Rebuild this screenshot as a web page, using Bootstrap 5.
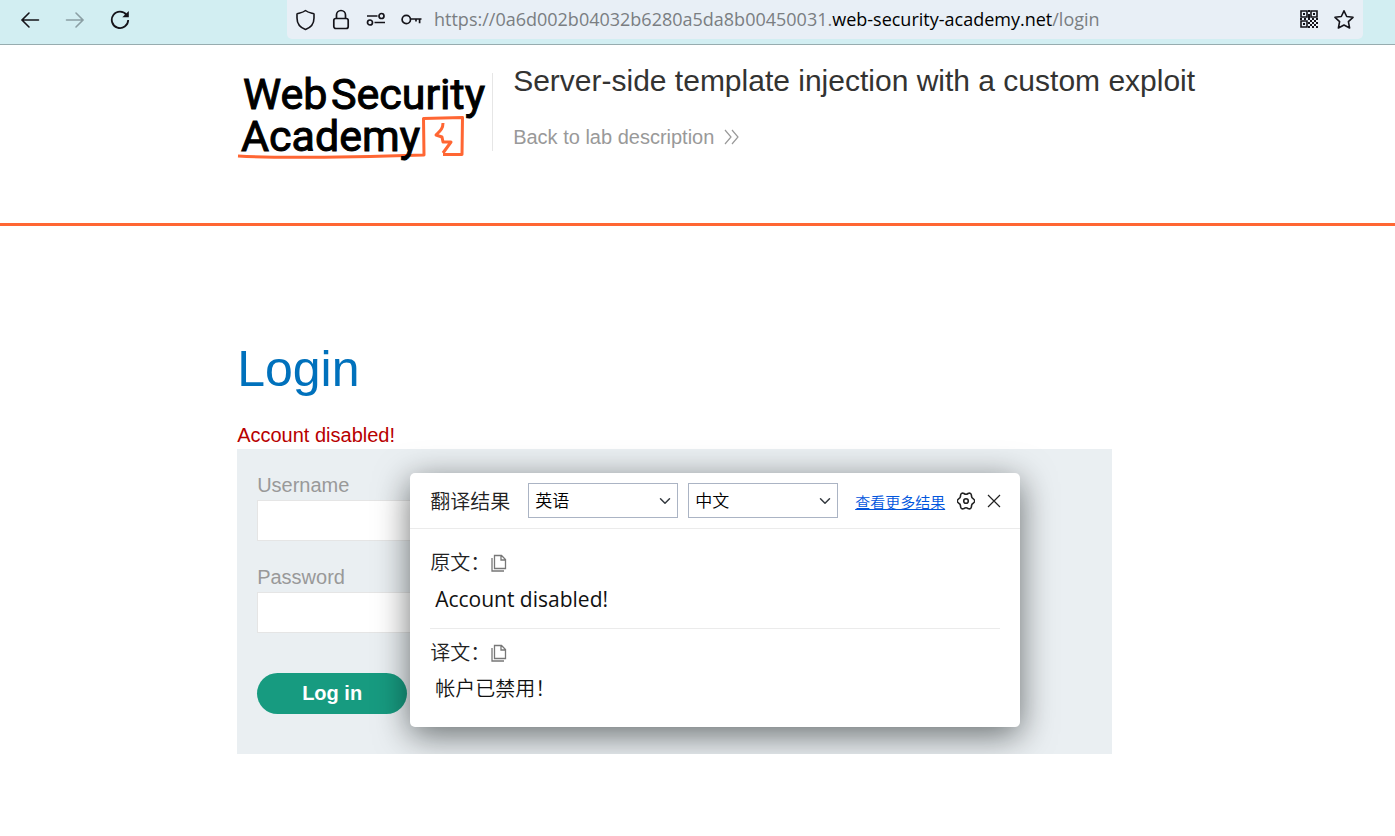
<!DOCTYPE html>
<html lang="en">
<head>
<meta charset="utf-8">
<meta name="viewport" content="width=device-width, initial-scale=1">
<title>Server-side template injection with a custom exploit</title>
<link href="https://cdn.jsdelivr.net/npm/bootstrap@5.3.0/dist/css/bootstrap.min.css" rel="stylesheet">
<style>
  body { font-family: "Liberation Sans", Arial, sans-serif; font-size: 20px; line-height: 24px; color: #333332; background: #fff; }
  svg { display: block; flex: none; fill: none; stroke: currentColor; }
  button.bare { border: 0; padding: 0; background: none; color: inherit; }
  button.forward { color: #8b9fa4; }
  .browser-bar { height: 45px; background: #d2eef2; border-bottom: 1px solid #97acaf; color: #15141a; padding: 0 32px 5px 20px; gap: 25px; }
  .address { height: 39px; margin-left: 132px; padding: 0 9px 0 8px; background: #e8eff6; border-radius: 0 0 5px 5px; gap: 15px; }
  .address-text { margin-left: -3px; padding-bottom: 2px; font-family: "Open Sans", sans-serif; font-size: 18px; color: #7a7e82; white-space: nowrap; }
  .address-text b { font-weight: 400; color: #000; }
  .indent { padding-left: 17%; }
  .lab-header { height: 181px; border-bottom: 3px solid #ff6633; padding-top: 19px; }
  .logo-box { width: 256px; height: 78px; margin-top: 9px; border-right: 1px solid #e6e6e6; }
  .logo-box svg { overflow: visible; }
  .logo-box text { font-family: "Roboto", sans-serif; font-size: 43px; font-weight: 400; fill: #000; stroke: #000; stroke-width: 1px; }
  .lab-title { font-size: 30px; line-height: 34px; margin: 0 0 27px; white-space: nowrap; }
  .lab-link { color: #999; text-decoration: none; }
  .login-heading { font-size: 50px; line-height: 58px; color: #0071bc; margin: 0 0 24px; }
  .login-area { padding-top: 114px; }
  .warning { color: #b80000; margin: 0; line-height: 27px; }
  .login-panel { max-width: 875px; height: 305px; background: #eaeff2; padding: 24px 20px 40px; }
  .login-panel label { display: block; color: #999; margin-bottom: 3px; }
  .login-panel .form-control { max-width: 500px; height: 41px; border: 1px solid #e5e5e5; border-radius: 0; margin-bottom: 24px; }
  .login-button { width: 150px; height: 41px; margin-top: 16px; padding: 0 0 2px; border: 0; border-radius: 21px; background: #179b80; color: #fff; font-size: 20px; font-weight: 700; }
  .login-button:hover { background: #128068; color: #fff; }
  .translation { position: absolute; left: 173px; top: 24px; width: 610px; height: 254px; background: #fff; border-radius: 5px; box-shadow: 0 8px 34px rgba(0, 8, 8, .56); font-family: "Open Sans", "Noto Sans CJK SC", sans-serif; font-weight: 400; color: #222; }
  .translation-head { height: 56px; padding: 0 0 0 20px; border-bottom: 1px solid #ebebeb; }
  .translation-head h2 { flex: none; font-size: 20px; line-height: 28px; font-weight: 350; margin: 2px 18px 0 0; }
  .translation-head .form-select { flex: none; width: 150px; height: 35px; margin-right: 10px; padding: 0 24px 0 6px; font-size: 17px; font-weight: 350; line-height: 28px; color: #000; border: 1px solid #abb4c4; border-radius: 0; background-position: right 5px center; background-size: 14px 12px; }
  .more-link { font-size: 15px; font-weight: 350; color: #0055dd; margin: 3px 12px 0 7px; }
  .passage { padding: 20px 0 14px; margin: 0 20px; }
  .passage + .passage { border-top: 1px solid #ebebeb; padding-top: 10px; }
  .passage h3 { font-size: 20px; line-height: 28px; font-weight: 350; margin: 0; }
  .passage h3 button { color: #777; }
  .passage p { font-size: 20px; line-height: 28px; font-weight: 400; margin: 8px 0 0 5px; color: #111; }
  .passage p:lang(en) { font-size: 21px; margin-bottom: 1px; }
  .passage p:lang(zh) { font-weight: 350; }
</style>
</head>
<body>
<nav class="browser-bar d-flex align-items-center" aria-label="Browser">
  <button class="bare" type="button" aria-label="Back"><svg width="20" height="20" stroke-width="1.6"><path d="M18.500 10H2M9 3L2 10l7 7" stroke-linecap="round"/></svg></button>
  <button class="bare forward" type="button" aria-label="Forward"><svg width="20" height="20" stroke-width="1.600"><path d="M1.500 10H18M11 3l7 7-7 7" stroke-linecap="round"/></svg></button>
  <button class="bare" type="button" aria-label="Reload"><svg width="20" height="20" stroke-width="1.800"><path d="M16.600 5A8.200 8.200 0 1 0 18.200 10"/><path d="M18.800 1v6.200h-6.500z" fill="currentColor" stroke="none"/></svg></button>
  <div class="address d-flex align-items-center flex-grow-1">
    <svg width="21" height="22" stroke-width="1.600"><path d="M10.500 1.500C13 3.500 16 4 19 5v4c0 5-3 9.500-8.500 11.500C5 18.500 2 14 2 9V5c3-1 6-1.500 8.500-3.500z" stroke-linejoin="round"/></svg>
    <svg width="20" height="22" stroke-width="1.700"><rect x="2.800" y="9.500" width="14.400" height="10" rx="2"/><path d="M5.500 9.500V6a4.500 4.500 0 0 1 9 0v3.500"/></svg>
    <svg width="20" height="20" stroke-width="1.700"><path d="M1 6h10.500M8.500 12.500H19"/><circle cx="15.500" cy="6" r="2.500"/><circle cx="4" cy="12.500" r="2.500"/></svg>
    <svg width="21" height="20" stroke-width="1.700"><circle cx="5.300" cy="9.500" r="4.200"/><path d="M9.500 9H20.500M18.600 9v4.300M15 9v2.500"/></svg>
    <span class="address-text flex-grow-1">https://0a6d002b04032b6280a5da8b00450031.<b>web-security-academy.net</b>/login</span>
    <svg width="20" height="20" stroke-width="1.600"><path d="M2 1h6v6H2zM12 1h6v6h-6zM2 11h6v6H2z"/><path d="M4 4h2M14 4h2M4 14h2M10 0v2M10 4v4M1 9h2M5 9h2M9 9h2M13 9h2M17 9h2M11 11h2M15 11h2M9 13h2M13 13h2M17 13h2M11 15h2M15 15h2M9 17h2M13 17h2M17 17h2" stroke-width="2"/></svg>
    <svg width="20" height="20" stroke-width="1.600"><path d="M10 .8l2.700 5.700 6.300.8-4.600 4.300 1.200 6.400L10 15l-5.600 3 1.200-6.400L1 7.300l6.300-.8z" stroke-linejoin="round"/></svg>
  </div>
</nav>

<header class="lab-header indent d-flex">
  <div class="logo-box flex-shrink-0">
    <svg width="255" height="90" role="img" aria-label="Web Security Academy">
      <path d="M1 83c50 3 120 1 186-1l-.500-36.500 39-1-.500 37h-19" stroke="#ff6633" stroke-width="3" stroke-linejoin="round"/>
      <path d="M206 50c0 6-3 8-7 12l6 2 1 5h8l-8 11" stroke="#ff6633" stroke-width="3" stroke-linejoin="round"/>
      <text x="6" y="36">Web</text>
      <text x="94" y="36">Security</text>
      <text x="4" y="78">Academy</text>
    </svg>
  </div>
  <div class="ps-3 ms-1">
    <h1 class="lab-title">Server-side template injection with a custom exploit</h1>
    <a class="lab-link d-inline-flex align-items-center" href="#">Back to lab description
      <svg class="ms-2" width="18" height="18" stroke-width="1.200"><path d="M3 2l6 7-6 7M10 2l6 7-6 7"/></svg></a>
  </div>
</header>

<main class="login-area indent">
  <h1 class="login-heading">Login</h1>
  <p class="warning">Account disabled!</p>
  <div class="login-panel position-relative">
    <form>
      <label for="username">Username</label>
      <input class="form-control" id="username" type="text">
      <label for="password">Password</label>
      <input class="form-control" id="password" type="password">
      <button class="btn login-button" type="submit">Log in</button>
    </form>
    <section class="translation" lang="zh" aria-label="翻译结果">
      <div class="translation-head d-flex align-items-center">
        <h2>翻译结果</h2>
        <select class="form-select" aria-label="原文"><option>英语</option></select>
        <select class="form-select" aria-label="译文"><option>中文</option></select>
        <a class="more-link text-nowrap" href="#">查看更多结果</a>
        <button class="bare" type="button" aria-label="设置"><svg width="18" height="18" stroke-width="1.600"><path d="M16.500 7Q19 9 16.500 11Q14.200 12 14.500 14.500Q14 17.700 11 16.500Q9 15 7 16.500Q4 17.700 3.500 14.500Q3.800 12 1.500 11Q-1 9 1.500 7Q3.800 6 3.500 3.500Q4 .3 7 1.500Q9 3 11 1.500Q14 .3 14.500 3.500Q14.200 6 16.500 7Z"/><circle cx="9" cy="9" r="2.300"/></svg></button>
        <button class="bare ms-2" type="button" aria-label="关闭"><svg width="20" height="20" stroke-width="1.200"><path d="M5 4l12 12M17 4L5 16"/></svg></button>
      </div>
      <div class="passage">
        <h3 class="d-flex align-items-center">原文：<button class="bare" type="button" aria-label="复制"><svg width="18" height="18" stroke-width="1.300"><path d="M4.500 1.500h7l4 4v9h-11zM11 1.500v4.500h4.500M2 4v13h12"/></svg></button></h3>
        <p lang="en">Account disabled!</p>
      </div>
      <div class="passage">
        <h3 class="d-flex align-items-center">译文：<button class="bare" type="button" aria-label="复制"><svg width="18" height="18" stroke-width="1.300"><path d="M4.500 1.500h7l4 4v9h-11zM11 1.500v4.500h4.500M2 4v13h12"/></svg></button></h3>
        <p>帐户已禁用！</p>
      </div>
    </section>
  </div>
</main>
<script src="https://cdn.jsdelivr.net/npm/bootstrap@5.3.0/dist/js/bootstrap.bundle.min.js"></script>
</body>
</html>
